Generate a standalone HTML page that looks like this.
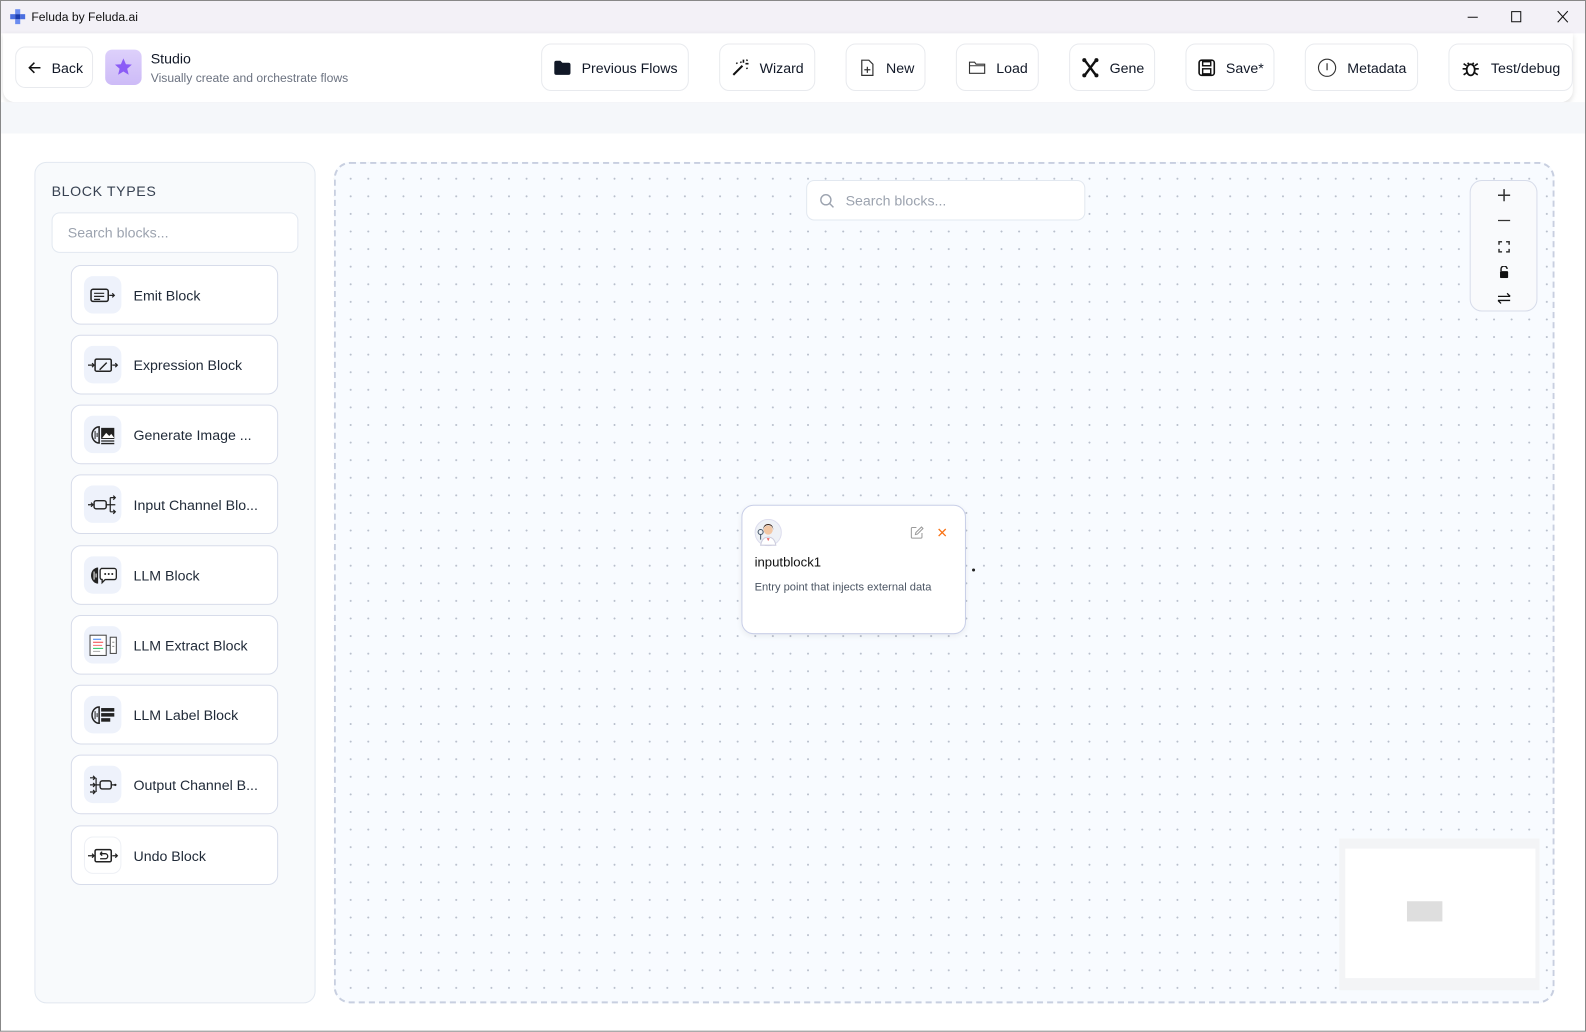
<!DOCTYPE html>
<html><head><meta charset="utf-8"><style>
*{box-sizing:border-box;margin:0;padding:0}
html,body{width:1586px;height:1032px;overflow:hidden}
body{font-family:"Liberation Sans",sans-serif;background:#fff;color:#111827}
#w{position:absolute;left:0;top:0;width:1568px;height:1020px;transform:scale(1.01148);transform-origin:0 0;border:1px solid #888;overflow:hidden;background:#fff}
.tb{position:absolute;left:0;top:0;width:1568px;height:32px;background:#f3f1f7;font-size:12px}
.tb .t{position:absolute;left:30px;top:9px;color:#111}
.hdr{position:absolute;left:2px;top:32px;width:1552px;height:68px;background:#fff;border-radius:0 0 12px 12px;box-shadow:0 2px 5px rgba(0,0,0,.12)}
.band{position:absolute;left:0;top:100px;width:1568px;height:31px;background:#f5f7fa}
.btn{position:absolute;height:47px;top:42px;border:1px solid #e8eaee;border-radius:10px;background:#fff;font-size:14px;display:flex;align-items:center;padding-left:11px;gap:10px;color:#111827}
.btn svg{flex:none}
.side{position:absolute;left:33px;top:159px;width:278px;height:832px;background:#f8fafc;border:1px solid #e2e8f0;border-radius:12px}
.side h3{position:absolute;left:16px;top:20px;font-size:14px;font-weight:normal;letter-spacing:.6px;color:#374151}
.sin{position:absolute;left:16px;top:49px;width:244px;height:40px;border:1.5px solid #e2e8f0;border-radius:8px;background:#fff;font-size:14px;color:#9ca3af;padding:11px 15px}
.item{position:absolute;left:35px;width:205px;height:59px;border:1px solid #d7dcea;border-radius:10px;background:#fff;display:flex;align-items:center;font-size:14px;color:#1f2937}
.ic{width:37px;height:37px;border-radius:9px;background:#eef2fb;margin:0 12px 0 12px;display:flex;align-items:center;justify-content:center}
.canvas{position:absolute;left:329px;top:159px;width:1207px;height:832px;border:2px dashed #c8cfe0;border-radius:16px;background-color:#f8fbff;background-image:radial-gradient(circle,#b8bfcc 0.8px,transparent 1.1px);background-size:17.4px 17.4px;background-position:6px 6px}
.cs{position:absolute;left:465px;top:16px;width:276px;height:40px;border:1.5px solid #e2e8f0;border-radius:8px;background:#fff;font-size:14px;color:#9ca3af;padding:11px 0 0 38px}
.zc{position:absolute;left:1121px;top:16px;width:67px;height:130px;border:1px solid #d7dcea;border-radius:12px;background:#f9fafc}
.zc div{height:25.5px;display:flex;align-items:center;justify-content:center}
.mini{position:absolute;left:992px;top:667px;width:198px;height:150px;background:#f3f4f6}
.node{position:absolute;left:732px;top:498px;width:222px;height:128px;background:#fff;border:1.5px solid #c9cfe8;border-radius:12px;box-shadow:0 2px 6px rgba(0,0,0,.06)}
</style></head><body><div id="w">
<div class="tb">
<svg style="position:absolute;left:9px;top:8px" width="15" height="15" viewBox="0 0 15 15"><rect x="5" y="0" width="5" height="5" fill="#6b8cf0"/><rect x="0" y="5" width="5" height="5" fill="#4a6ee0"/><rect x="10" y="5" width="5" height="5" fill="#4a6ee0"/><rect x="5" y="10" width="5" height="5" fill="#6b8cf0"/><rect x="5" y="5" width="5" height="5" fill="#1a3cb0"/></svg>
<span class="t">Feluda by Feluda.ai</span>
<svg style="position:absolute;left:1448px;top:9px" width="110" height="14"><line x1="2" y1="7" x2="12" y2="7" stroke="#111"/><rect x="45.5" y="1.5" width="9" height="10" fill="none" stroke="#111"/><path d="M91 1l10 11M101 1l-10 11" stroke="#111"/></svg>
</div>
<div class="hdr"></div>
<div class="band"></div>
<div class="btn" style="left:14px;width:77px;height:41px;top:45px;padding-left:11px;gap:10px"><svg width="14" height="14" viewBox="0 0 14 14"><path d="M13 7H2M7 2L2 7l5 5" stroke="#111" stroke-width="1.5" fill="none"/></svg>Back</div>
<div style="position:absolute;left:103px;top:48px;width:36px;height:35px;border-radius:7px;background:linear-gradient(#ddd0fb,#cdbbf7)"><svg style="position:absolute;left:8px;top:7px" width="20" height="20" viewBox="0 0 24 24"><path d="M12 2l3 7 7 .5-5.5 4.8 1.8 7.2L12 17.6 5.7 21.5l1.8-7.2L2 9.5 9 9z" fill="#8b5cf6"/></svg></div>
<div style="position:absolute;left:148px;top:49px;font-size:14px">Studio</div>
<div style="position:absolute;left:148px;top:69px;font-size:12px;color:#6b7280">Visually create and orchestrate flows</div>
<div class="btn" style="left:534px;width:146px"><svg width="18" height="16"><path d="M1 3a2 2 0 012-2h4l2 2h6a2 2 0 012 2v8a2 2 0 01-2 2H3a2 2 0 01-2-2z" fill="#111827"/></svg>Previous Flows</div>
<div class="btn" style="left:710px;width:95px"><svg width="18" height="18"><path d="M2 16L11 7" stroke="#111" stroke-width="2"/><path d="M12 1v3M14 5h3M9 3l1 1M16 1l-1 1M5 4l1 1M15 9l1 1" stroke="#111" stroke-width="1.6"/></svg>Wizard</div>
<div class="btn" style="left:835px;width:79px"><svg width="18" height="18"><path d="M4 1.5h7l4 4v11H4z" fill="none" stroke="#333" stroke-width="1.2"/><path d="M9.5 8v6M6.5 11h6" stroke="#333" stroke-width="1.2"/></svg>New</div>
<div class="btn" style="left:944px;width:82px"><svg width="18" height="16"><path d="M1.5 2.5h5l1.5 2h8.5v9h-15zM1.5 6h15" fill="none" stroke="#333" stroke-width="1.1"/></svg>Load</div>
<div class="btn" style="left:1056px;width:85px"><svg width="18" height="20"><path d="M3 2l12 16M15 2L3 18" stroke="#111" stroke-width="2.4"/><circle cx="3" cy="2.5" r="2" fill="#111"/><circle cx="15" cy="2.5" r="2" fill="#111"/><circle cx="3" cy="17.5" r="2" fill="#111"/><circle cx="15" cy="17.5" r="2" fill="#111"/></svg>Gene</div>
<div class="btn" style="left:1171px;width:88px"><svg width="18" height="18"><rect x="1.5" y="1.5" width="15" height="15" rx="2.5" fill="none" stroke="#111" stroke-width="1.6"/><rect x="5" y="3" width="8" height="4" fill="none" stroke="#111" stroke-width="1.4"/><rect x="5" y="10" width="8" height="5" fill="none" stroke="#111" stroke-width="1.4"/></svg>Save*</div>
<div class="btn" style="left:1289px;width:112px"><svg width="20" height="20"><circle cx="10" cy="10" r="8.5" fill="none" stroke="#333" stroke-width="1.1"/><path d="M10 5.5v7" stroke="#333" stroke-width="1.2"/></svg>Metadata</div>
<div class="btn" style="left:1431px;width:123px"><svg width="20" height="20"><ellipse cx="10" cy="12" rx="4" ry="5.5" fill="none" stroke="#111" stroke-width="1.8"/><path d="M7 5l1.5 2M13 5l-1.5 2M2 11h4M14 11h4M3 17l3-2M17 17l-3-2M3 6l3 2M17 6l-3 2" stroke="#111" stroke-width="1.6"/></svg>Test/debug</div>

<div class="side"><h3>BLOCK TYPES</h3><div class="sin">Search blocks...</div></div>
<div class="item" style="top:261px;left:69px"><div class="ic"><svg width="28" height="16"><rect x="2" y="2" width="17" height="12" rx="2" fill="none" stroke="#222" stroke-width="1.5"/><path d="M5 6h10M5 9h10M5 12h6M20 8h5M23 6l2 2-2 2" stroke="#222" stroke-width="1.2" fill="none"/></svg></div>Emit Block</div>
<div class="item" style="top:330px;left:69px"><div class="ic"><svg width="32" height="16"><path d="M1 8h6M5 6l2 2-2 2M25 8h5M28 6l2 2-2 2" stroke="#222" stroke-width="1.2" fill="none"/><rect x="8" y="2" width="16" height="12" rx="1.5" fill="none" stroke="#222" stroke-width="1.5"/><path d="M12 12l7-7 1 1-7 7z" fill="#222"/></svg></div>Expression Block</div>
<div class="item" style="top:399px;left:69px"><div class="ic"><svg width="28" height="22"><path d="M3 11a7 8 0 017-8v16a7 8 0 01-7-8z" fill="none" stroke="#222" stroke-width="1.5"/><path d="M6 7v8M8 9v4" stroke="#222"/><rect x="12" y="4" width="13" height="11" fill="#222"/><path d="M13 14l4-5 3 3 2-2 3 4z" fill="#fff"/><path d="M12 17h13M12 19.5h13" stroke="#222" stroke-width="1.3"/></svg></div>Generate Image ...</div>
<div class="item" style="top:468px;left:69px"><div class="ic"><svg width="32" height="22"><path d="M1 11h5M4 9l2 2-2 2" stroke="#222" stroke-width="1.2" fill="none"/><rect x="7" y="7" width="12" height="8" rx="2" fill="none" stroke="#222" stroke-width="1.4"/><path d="M19 11h4M23 4v14M23 4h5M23 18h5M23 11h5M26 2l2 2-2 2M26 16l2 2-2 2" stroke="#222" stroke-width="1.2" fill="none"/></svg></div>Input Channel Blo...</div>
<div class="item" style="top:538px;left:69px"><div class="ic"><svg width="30" height="22"><path d="M3 11a7 8 0 017-8v16a7 8 0 01-7-8z" fill="#222"/><path d="M6 7v8M8 9v4" stroke="#fff"/><path d="M13 4h13a2 2 0 012 2v7a2 2 0 01-2 2h-9l-3 3v-3a2 2 0 01-2-2V6a2 2 0 012-2z" fill="#fff" stroke="#222" stroke-width="1.3"/><circle cx="17" cy="9.5" r="1" fill="#222"/><circle cx="20.5" cy="9.5" r="1" fill="#222"/><circle cx="24" cy="9.5" r="1" fill="#222"/></svg></div>LLM Block</div>
<div class="item" style="top:607px;left:69px"><div class="ic"><svg width="30" height="24"><rect x="2" y="2" width="16" height="20" fill="#fff" stroke="#444"/><path d="M5 6h8" stroke="#3b82f6"/><path d="M5 9h10" stroke="#ef4444"/><path d="M5 12h9" stroke="#f87171"/><path d="M5 15h10" stroke="#22c55e"/><path d="M5 18h7" stroke="#aaa"/><path d="M18 12h4" stroke="#444"/><rect x="22" y="4" width="6" height="16" fill="#fff" stroke="#444"/><path d="M24 9h2M24 13h2" stroke="#888"/></svg></div>LLM Extract Block</div>
<div class="item" style="top:676px;left:69px"><div class="ic"><svg width="28" height="22"><path d="M3 11a7 8 0 017-8v16a7 8 0 01-7-8z" fill="none" stroke="#222" stroke-width="1.5"/><path d="M6 7v8M8 9v4" stroke="#222"/><rect x="12" y="4" width="13" height="3.5" fill="#222"/><rect x="12" y="9" width="13" height="3.5" fill="#222"/><rect x="12" y="14" width="9" height="3.5" fill="#222"/></svg></div>LLM Label Block</div>
<div class="item" style="top:745px;left:69px"><div class="ic"><svg width="30" height="22"><path d="M2 4h5M2 11h5M2 18h5M5 2l2 2-2 2M5 9l2 2-2 2M5 16l2 2-2 2M8 4v14M8 11h4" stroke="#222" stroke-width="1.2" fill="none"/><rect x="12" y="7" width="11" height="8" rx="2" fill="none" stroke="#222" stroke-width="1.4"/><path d="M23 11h4" stroke="#222" stroke-width="1.2"/><circle cx="27" cy="11" r="1.2" fill="#222"/></svg></div>Output Channel B...</div>
<div class="item" style="top:815px;left:69px"><div class="ic" style="background:#fff;border:1px solid #eef0f5"><svg width="32" height="16"><path d="M1 8h6M5 6l2 2-2 2M25 8h5M28 6l2 2-2 2" stroke="#222" stroke-width="1.2" fill="none"/><rect x="8" y="2" width="16" height="12" rx="1.5" fill="none" stroke="#222" stroke-width="1.5"/><path d="M13 6h5a2.5 2.5 0 010 5h-5M13 6l2-2M13 6l2 2" stroke="#222" stroke-width="1.3" fill="none"/></svg></div>Undo Block</div>

<div class="canvas">
<div class="cs"><svg style="position:absolute;left:12px;top:12px" width="15" height="15"><circle cx="6.5" cy="6.5" r="5" fill="none" stroke="#9ca3af" stroke-width="1.4"/><path d="M10 10l4 4" stroke="#9ca3af" stroke-width="1.4"/></svg>Search blocks...</div>
<div class="zc">
<div style="margin-top:1px"><svg width="14" height="14"><path d="M7 1v12M1 7h12" stroke="#333" stroke-width="1.5"/></svg></div>
<div><svg width="14" height="14"><path d="M1 7h12" stroke="#333" stroke-width="1.2"/></svg></div>
<div><svg width="12" height="12"><path d="M1 4V1h3M8 1h3v3M11 8v3H8M4 11H1V8" stroke="#333" stroke-width="1.5" fill="none"/></svg></div>
<div><svg width="12" height="12"><path d="M3 5V3a3 3 0 016 0" stroke="#111" stroke-width="1.4" fill="none"/><rect x="2" y="5" width="8" height="7" rx="1" fill="#111"/></svg></div>
<div><svg width="14" height="14"><path d="M1 5h12M10 2l3 3M13 9H1M4 12l-3-3" stroke="#111" stroke-width="1.3" fill="none"/></svg></div>
</div>
<div class="mini"><div style="position:absolute;left:6px;top:10px;width:188px;height:128px;background:#fff"></div><div style="position:absolute;left:67px;top:62px;width:35px;height:20px;background:#dedede"></div></div>
</div>

<div class="node">
<svg style="position:absolute;left:12px;top:13px" width="27" height="27" viewBox="0 0 27 27"><circle cx="13.5" cy="13.5" r="13" fill="#eef1f6" stroke="#dde"/><path d="M6 26c1-6 4-8 7.5-8s6.5 2 7.5 8z" fill="#fff" stroke="#ccd"/><circle cx="13.5" cy="11" r="4.5" fill="#f2c7a5"/><path d="M8.5 11a5 5 0 0110 0c0-4-2-6-5-6s-5 2-5 6z" fill="#3a2418"/><path d="M12 19l1.5 3 1.5-3" fill="#e66"/><circle cx="6" cy="13" r="2.5" fill="none" stroke="#456" stroke-width="1"/><path d="M6 15.5v5" stroke="#456"/></svg>
<svg style="position:absolute;left:166px;top:20px" width="13" height="13"><path d="M6 1.5H2a1 1 0 00-1 1V11a1 1 0 001 1h8.5a1 1 0 001-1V7" stroke="#999" fill="none"/><path d="M5 8.5l.5-2L11 1l1.5 1.5L7 8z" stroke="#999" fill="none"/></svg>
<svg style="position:absolute;left:193px;top:22px" width="9" height="9"><path d="M1 1l7 7M8 1L1 8" stroke="#f97316" stroke-width="1.3"/></svg>
<div style="position:absolute;left:12px;top:48px;font-size:13px;color:#111">inputblock1</div>
<div style="position:absolute;left:12px;top:75px;font-size:11px;color:#4b5563">Entry point that injects external data</div>
</div>
<div style="position:absolute;left:960px;top:561px;width:3px;height:3px;border-radius:50%;background:#222"></div>
</div></body></html>
